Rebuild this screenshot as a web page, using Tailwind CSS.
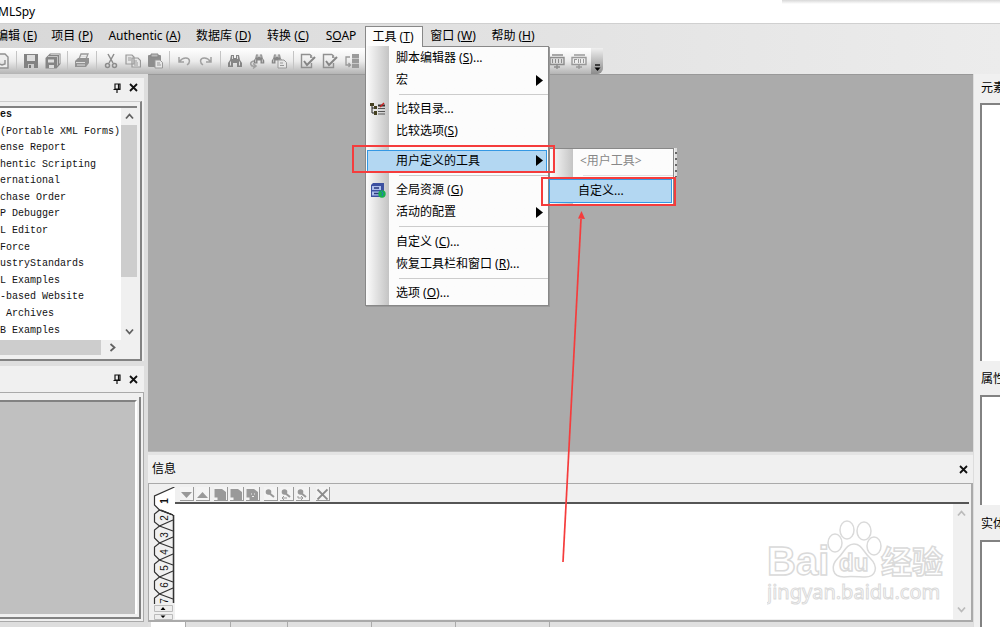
<!DOCTYPE html>
<html lang="zh">
<head>
<meta charset="utf-8">
<title>XMLSpy</title>
<script src="https://cdn.jsdelivr.net/npm/@tailwindcss/browser@4"></script>
</head>
<body class="relative flex h-screen flex-col overflow-hidden bg-[#e4e4e4] font-['Noto_Sans','Noto_Sans_CJK_SC',sans-serif] text-[12px] leading-4 text-black">
<svg class="hidden">
  <symbol id="pin" viewBox="0 0 8 10"><path d="M2 1h5v5H2zM0.5 6.5h7M4 7v3M5.5 1v5" fill="none" stroke="#111" stroke-width="1.2"/></symbol>
  <symbol id="close" viewBox="0 0 9 9"><path d="M1 1l7 7M8 1L1 8" fill="none" stroke="#111" stroke-width="1.8"/></symbol>
  <symbol id="binoc" viewBox="0 0 16 16"><path d="M4 2h3v3h2V2h3l1 5 2 3v4h-5v-4H6v4H1v-4l2-3z" fill="#858585"/><path d="M3.5 8.500v4M12.500 8.500v4M5.500 3v3M10.500 3v3" stroke="#ddd"/></symbol>
  <symbol id="check" viewBox="0 0 16 16"><path d="M10 1.500H1.500v13h10V10M10 1.500l2 2" fill="none" stroke="#909090" stroke-width="1.400"/><path d="M4 8l3 4 8-8" fill="none" stroke="#858585" stroke-width="2"/><path d="M10 1v4h3z" fill="#999"/></symbol>
  <symbol id="down" viewBox="0 0 9 9"><path d="M1 2.500l3.500 4 3.500-4" fill="none" stroke="currentColor" stroke-width="1.800"/></symbol>
  <symbol id="mark" viewBox="0 0 12 12"><circle cx="4.500" cy="4" r="2.800" fill="#999"/><path d="M5 5l5 4" stroke="#999" stroke-width="2"/></symbol>
  <symbol id="pages" viewBox="0 0 12 12"><path d="M0.500 1H8l4 3v8H3.500V9.500h-3z" fill="#999"/></symbol>
</svg>

<header class="flex h-6 shrink-0 items-center border-b border-[#d0d0d0] bg-white text-[12px]"><span class="-ml-0.5">MLSpy</span>
  <div class="absolute top-0 right-0 h-1 w-[218px] bg-gradient-to-b from-[#d8d8d8] to-white"></div>
</header>

<nav class="flex h-6 shrink-0 items-center bg-gradient-to-r from-[#d8d8d8] to-[#ececec]">
  <button class="-ml-[10px] h-full w-[53px] whitespace-nowrap text-center">编辑 (<u>E</u>)</button>
  <button class="h-full w-[58px] whitespace-nowrap">项目 (<u>P</u>)</button>
  <button class="h-full w-[87px] whitespace-nowrap">Authentic (<u>A</u>)</button>
  <button class="h-full w-[71px] whitespace-nowrap">数据库 (<u>D</u>)</button>
  <button class="h-full w-[58px] whitespace-nowrap">转换 (<u>C</u>)</button>
  <button class="h-full w-[48px] whitespace-nowrap">S<u>O</u>AP</button>
  <button class="mt-0.5 h-[22px] w-[58px] whitespace-nowrap border border-b-0 border-[#888] bg-[#fcfcfc] pr-[2px] pb-[2px]">工具 (<u>T</u>)</button>
  <button class="h-full w-[60px] whitespace-nowrap">窗口 (<u>W</u>)</button>
  <button class="h-full w-[60px] whitespace-nowrap">帮助 (<u>H</u>)</button>
</nav>

<div class="flex h-[26px] shrink-0 bg-gradient-to-r from-[#d8d8d8] to-[#ececec]">
  <div class="flex w-[603px] items-center rounded-r-md bg-gradient-to-b from-white via-[#ececec] to-[#b4b4b4]">
    <button aria-label="new" class="-ml-[9px] flex w-[22px] justify-center"><svg class="size-4"><path d="M2 1h9l3 3v11H2zM5 7v4l3 1 3-1V7" fill="#eee" stroke="#909090" stroke-width="1.400"/></svg></button>
    <i class="mx-[3px] h-5 w-px bg-[#c4c4c4]"></i>
    <button aria-label="save" class="flex w-[22px] justify-center"><svg class="size-4"><path d="M1 1h14v14H1z" fill="#828282"/><path d="M4 2h8v6H4z" fill="#ddd"/><path d="M5 11h6v4H5z" fill="#ccc"/><path d="M6 12h2v3H6z" fill="#777"/></svg></button>
    <button aria-label="save all" class="flex w-[22px] justify-center"><svg class="size-4"><path d="M5 0.500h10.500V11l-4 4.500H0.500V5z" fill="#858585"/><path d="M3 6.500h6v3H3zM4 12h5v3H4z" fill="#ddd"/><path d="M3 3.500h9.500v9M5.500 1.500h9v9" fill="none" stroke="#c4c4c4"/></svg></button>
    <i class="mx-[3px] h-5 w-px bg-[#c4c4c4]"></i>
    <button aria-label="print" class="flex w-[22px] justify-center"><svg class="size-4"><path d="M5 6l2-5h7l-2 5" fill="#eee" stroke="#999" stroke-width="1.300"/><path d="M1 8l3-3h11v5l-3 4H1z" fill="#929292"/><path d="M2 9.500h9M3 12h8M7 3.500h5" stroke="#ddd"/></svg></button>
    <i class="mx-[3px] h-5 w-px bg-[#c4c4c4]"></i>
    <button aria-label="cut" class="flex w-[22px] justify-center"><svg class="size-4"><g fill="none" stroke="#8c8c8c" stroke-width="1.500"><path d="M5 1l5 9M11 1L6 10"/><circle cx="4.500" cy="12.500" r="2"/><circle cx="11.500" cy="12.500" r="2"/></g></svg></button>
    <button aria-label="copy" class="flex w-[22px] justify-center"><svg class="size-4"><g fill="#e6e6e6" stroke="#999" stroke-width="1.200"><path d="M1 2h6l2 2v7H1zM7 5h6l2.500 2.500V14H7z"/><path d="M3 5h3M3 7h3M9 8h3M9 10h4M9 12h4"/></g></svg></button>
    <button aria-label="paste" class="flex w-[22px] justify-center"><svg class="size-4"><rect x="1" y="2" width="13" height="12" rx="1" fill="#8e8e8e"/><path d="M4 1h7v3H4z" fill="#bbb" stroke="#888"/><path d="M8 7h5l2.500 2.500V15H8z" fill="#e6e6e6" stroke="#999"/><path d="M10 10h3M10 12h4" stroke="#999"/></svg></button>
    <i class="mx-[3px] h-5 w-px bg-[#c4c4c4]"></i>
    <button aria-label="undo" class="flex w-[22px] justify-center"><svg class="size-4"><path d="M3 4v5h5M3.500 8.500C7 4 13 4 13.500 8c0 2-1 3-2.500 4" fill="none" stroke="#a0a0a0" stroke-width="1.500"/></svg></button>
    <button aria-label="redo" class="flex w-[22px] justify-center"><svg class="size-4"><path d="M13 4v5H8M12.500 8.500C9 4 3 4 2.500 8c0 2 1 3 2.500 4" fill="none" stroke="#a0a0a0" stroke-width="1.500"/></svg></button>
    <i class="mx-[3px] h-5 w-px bg-[#c4c4c4]"></i>
    <button aria-label="find" class="flex w-[22px] justify-center"><svg class="size-4"><use href="#binoc"/></svg></button>
    <button aria-label="find next" class="flex w-[22px] justify-center"><svg class="size-4"><use href="#binoc" x="4" y="0" width="12" height="12"/><path d="M5 8c-5 1-4 6 1 5M4 10.500l3 2.500-3 2.500" fill="none" stroke="#a0a0a0" stroke-width="1.500"/></svg></button>
    <button aria-label="find in files" class="flex w-[22px] justify-center"><svg class="size-4"><use href="#binoc" x="0" y="0" width="12" height="12"/><path d="M7 7h6l2.500 2.500V15H7z" fill="#e6e6e6" stroke="#999"/><path d="M9 10h3M9 12.500h4" stroke="#999"/></svg></button>
    <i class="mx-[3px] h-5 w-px bg-[#c4c4c4]"></i>
    <button aria-label="well-formed" class="flex w-[22px] justify-center"><svg class="size-4"><use href="#check"/></svg></button>
    <button aria-label="validate" class="flex w-[22px] justify-center"><svg class="size-4"><use href="#check"/></svg></button>
    <button aria-label="transform" class="flex w-[22px] justify-center"><svg class="size-4"><path d="M6 4H2v8h4M4.500 10L6.500 12l-2 2" fill="none" stroke="#999" stroke-width="1.300"/><path d="M8 1h7v14H8z" fill="#9a9a9a"/><path d="M8 5.500h7M8 10.500h7" stroke="#c8c8c8"/></svg></button>
    <button aria-label="soap" class="ml-auto flex w-[22px] justify-center"><svg class="size-4"><path d="M3 2h11M1 4.500h14v7H1zM8 12v4M5 14h6" fill="#ddd" stroke="#8c8c8c" stroke-width="1.400"/><path d="M3.500 6v4M6.500 6v4M9.500 6v4M12.500 6v4" stroke="#8c8c8c"/></svg></button>
    <button aria-label="file" class="flex w-[22px] justify-center"><svg class="size-4"><path d="M3 2h11M1 4.500h14v7H1zM8 12v4M5 14h6" fill="#eee" stroke="#999" stroke-width="1.400"/><path d="M3.500 6v4M4 6.500h2M7.500 6v4M9.500 6v4M12.500 6v4" stroke="#999"/></svg></button>
    <button aria-label="more" class="ml-px flex h-full w-3 items-end justify-center rounded-br-md bg-gradient-to-b from-[#f0f0f0] to-[#8c8c8c] pb-0.5"><svg class="h-2 w-[7px]"><path d="M1 1h5" stroke="#000" stroke-width="1.300"/><path d="M0.500 3.500h6L3.500 7z"/></svg></button>
  </div>
</div>

<main class="flex min-h-0 flex-1">
  <aside class="flex w-[148px] shrink-0 flex-col bg-[#dedede] pt-1 pr-1">
    <section class="flex h-[283px] shrink-0 flex-col bg-[#f0f0f0]">
      <div class="flex h-[23px] shrink-0 items-center justify-end gap-2 pr-[6px] pb-1">
        <button aria-label="pin"><svg class="h-[10px] w-2"><use href="#pin"/></svg></button><button aria-label="close"><svg class="size-[9px]"><use href="#close"/></svg></button>
      </div>
      <div class="mr-[2px] flex min-h-0 flex-1 flex-col border-t border-r-2 border-b-2 border-t-[#ccc] border-r-[#828282] border-b-[#828282] pr-[3px] pt-1 pb-1">
        <div class="flex min-h-0 flex-1 border-t-2 border-[#828282]">
          <ul class="flex min-w-0 flex-1 flex-col whitespace-pre bg-white font-['Liberation_Mono',monospace] text-[10px] leading-[14px] text-[#111]">
            <li class="min-h-0 flex-1 font-bold">es</li>
            <li class="min-h-0 flex-1">(Portable XML Forms)</li>
            <li class="min-h-0 flex-1">ense Report</li>
            <li class="min-h-0 flex-1">hentic Scripting</li>
            <li class="min-h-0 flex-1">ernational</li>
            <li class="min-h-0 flex-1">chase Order</li>
            <li class="min-h-0 flex-1">P Debugger</li>
            <li class="min-h-0 flex-1">L Editor</li>
            <li class="min-h-0 flex-1">Force</li>
            <li class="min-h-0 flex-1">ustryStandards</li>
            <li class="min-h-0 flex-1">L Examples</li>
            <li class="min-h-0 flex-1">-based Website</li>
            <li class="min-h-0 flex-1"> Archives</li>
            <li class="min-h-0 flex-1">B Examples</li>
          </ul>
          <div class="flex w-4 flex-col items-center bg-[#f0f0f0] text-[#606060]">
            <svg class="my-1 size-[9px] rotate-180"><use href="#down"/></svg>
            <div class="h-[152px] w-full bg-[#cdcdcd]"></div>
            <svg class="mt-auto mb-1 size-[9px]"><use href="#down"/></svg>
          </div>
        </div>
        <div class="flex h-[15px] shrink-0 items-center text-[#606060]"><div class="h-full w-[101px] bg-[#cdcdcd]"></div><svg class="ml-[7px] size-[9px] -rotate-90"><use href="#down"/></svg></div>
      </div>
    </section>
    <section class="mt-[5px] mb-[5px] flex min-h-0 flex-1 flex-col bg-[#f0f0f0]">
      <div class="flex h-[26px] shrink-0 items-center justify-end gap-2 pr-[6px]">
        <button aria-label="pin"><svg class="h-[10px] w-2"><use href="#pin"/></svg></button><button aria-label="close"><svg class="size-[9px]"><use href="#close"/></svg></button>
      </div>
      <div class="flex min-h-0 flex-1 border-y border-r border-[#aaa] pt-1 pr-[2px] pb-[2px]">
        <div class="flex flex-1 border-r-2 border-b-2 border-[#828282] pr-[2px] pt-[3px] pb-[3px]"><div class="flex-1 border-t-2 border-r-2 border-t-[#828282] border-r-white bg-[#c0c0c0]"></div></div>
      </div>
    </section>
  </aside>

  <div class="flex min-w-0 flex-1 flex-col">
    <div class="min-h-0 flex-1 border-t border-[#999] bg-[#ababab]"></div>
    <div class="h-1 shrink-0 border-t border-[#bbb] bg-[#e4e4e4]"></div>
    <section class="flex h-[167px] shrink-0 flex-col bg-[#f0f0f0]">
      <div class="flex h-[28px] shrink-0 items-center justify-between px-[4px]"><h2>信息</h2><button aria-label="close" class="mr-px"><svg class="size-[9px]"><use href="#close"/></svg></button></div>
      <div class="flex min-h-0 flex-1 border border-r-2 border-b-2 border-[#aaa] pt-[3px] pr-[2px] pb-px pl-1">
        <svg class="h-[133px] w-[22px] shrink-0" viewBox="0 0 22 133">
          <rect width="22" height="133" fill="#f0f0f0"/>
          <path d="M22 0L1.500 9v10l5 5L20 28h2z" fill="#fff"/>
          <g fill="none" stroke="#333" stroke-width="1.200">
            <path d="M21.500 0L1.500 9v9l5 5L20 28"/>
            <path d="M20 28L6.500 23l-5 4v8l5 4L20 44"/>
            <path d="M20 28L8 23M20 33L6.500 39l-5 4v8l5 5L20 61M20 50L6.500 56l-5 4v8l5 5L20 78M20 67L6.500 73l-5 4v8l5 5L20 95M20 84L6.500 90l-5 4v8l5 5L20 112M20 101L6.500 107l-5 4v6"/>
            <path d="M20.500 28v88" stroke-width="1.500"/>
          </g>
          <g class="font-['Liberation_Sans',sans-serif] text-[10px]" fill="#111" text-anchor="middle">
            <text transform="translate(15 14) rotate(-90)" font-weight="bold">1</text>
            <text transform="translate(15 31) rotate(-90)">2</text>
            <text transform="translate(15 48) rotate(-90)">3</text>
            <text transform="translate(15 65) rotate(-90)">4</text>
            <text transform="translate(15 81) rotate(-90)">5</text>
            <text transform="translate(15 98) rotate(-90)">6</text>
            <text transform="translate(15 114) rotate(-90)">7</text>
          </g>
          <path d="M1.500 118.500h18v6h-18zM1.500 127.500h18v5h-18z" fill="#eee" stroke="#bbb"/>
          <path d="M7.500 123h5L10 120zM7.500 128.500h5L10 131z"/>
        </svg>
        <div class="flex min-w-0 flex-1 flex-col">
          <div class="flex h-[17px] shrink-0 items-start gap-[2px] border-b-2 border-[#555] pl-[5px]">
            <button aria-label="next" class="h-[14px] w-[14px] border-r border-b border-[#999] bg-[#f4f4f4]"><svg class="size-3"><path d="M1 4h11L6.500 10z" fill="#999"/></svg></button>
            <button aria-label="previous" class="mr-[2px] h-[14px] w-[14px] border-r border-b border-[#999] bg-[#f4f4f4]"><svg class="size-3"><path d="M1 10h11L6.500 4z" fill="#999"/></svg></button>
            <button aria-label="copy line" class="h-[14px] w-[14px] border-r border-b border-[#999] bg-[#f4f4f4]"><svg class="size-3"><use href="#pages"/></svg></button>
            <button aria-label="copy lines" class="h-[14px] w-[14px] border-r border-b border-[#999] bg-[#f4f4f4]"><svg class="size-3"><use href="#pages"/></svg></button>
            <button aria-label="copy all" class="mr-[2px] h-[14px] w-[14px] border-r border-b border-[#999] bg-[#f4f4f4]"><svg class="size-3"><use href="#pages"/><path d="M5 6h1M8 6h1M6 8.500h2" stroke="#eee"/></svg></button>
            <button aria-label="find" class="h-[14px] w-[14px] border-r border-b border-[#999] bg-[#f4f4f4]"><svg class="size-3"><use href="#mark"/></svg></button>
            <button aria-label="find previous" class="h-[14px] w-[14px] border-r border-b border-[#999] bg-[#f4f4f4]"><svg class="size-3"><use href="#mark"/><path d="M7 10H2l2-2M2 10l2 2" fill="none" stroke="#999"/></svg></button>
            <button aria-label="find next" class="mr-1 h-[14px] w-[14px] border-r border-b border-[#999] bg-[#f4f4f4]"><svg class="size-3"><use href="#mark"/><path d="M2 8v2h5M5 8l2 2-2 2" fill="none" stroke="#999"/></svg></button>
            <button aria-label="clear" class="h-[14px] w-[14px] border-r border-b border-[#999] bg-[#f4f4f4]"><svg class="size-3"><path d="M1.500 1.500l10 10M11.500 1.500l-10 10" stroke="#8c8c8c" stroke-width="1.800"/></svg></button>
          </div>
          <div class="flex min-h-0 flex-1 bg-white">
            <div class="flex flex-1 items-start justify-end pt-[14px] pr-[4px]">
              <svg class="h-[96px] w-[182px]" viewBox="0 0 182 96" fill="#fff" stroke="#dadada" stroke-width="1.500">
                <text x="0" y="57" class="font-['Liberation_Sans',sans-serif] text-[40px] font-bold">Bai</text>
                <ellipse cx="68" cy="25" rx="7" ry="9"/><ellipse cx="80" cy="12" rx="7" ry="9"/><ellipse cx="97" cy="13" rx="7" ry="9"/><ellipse cx="107" cy="28" rx="7" ry="9"/>
                <path d="M87 26c8 0 9 8 16 14 9 9 6 19-5 19-5 0-16-1-21 0-12 0-14-11-6-19 6-5 8-14 16-14z"/>
                <text x="72" y="53" class="font-['Liberation_Sans',sans-serif] text-[24px] font-bold">du</text>
                <text x="114" y="55" class="font-['Noto_Sans_CJK_SC',sans-serif] text-[31px] font-bold">经验</text>
                <text x="0" y="81" class="font-['Noto_Sans',sans-serif] text-[20px]" stroke-width="1">jingyan.baidu.com</text>
              </svg>
            </div>
            <div class="flex w-4 flex-col items-center justify-between bg-[#f0f0f0] py-[5px] text-[#bbb]"><svg class="size-[9px] rotate-180"><use href="#down"/></svg><svg class="size-[9px]"><use href="#down"/></svg></div>
          </div>
        </div>
      </div>
    </section>
    <div class="flex h-[5px] shrink-0 bg-[#e0e0e0]"><i class="ml-[3px] w-[34px] bg-white"></i><i class="w-[46px] border-r border-l border-[#aaa]"></i><i class="w-[57px] border-r border-[#aaa]"></i><i class="w-[84px] border-r border-[#aaa]"></i><i class="w-[84px] border-r border-[#aaa]"></i><i class="w-[94px] border-r border-[#aaa]"></i></div>
  </div>

  <aside class="flex w-[27px] shrink-0 flex-col overflow-hidden border-l border-[#ddd] bg-[#f0f0f0] pl-[6px] whitespace-nowrap">
    <h2 class="h-[29px] shrink-0 pt-[6px] pl-px">元素</h2>
    <div class="h-[258px] shrink-0 border-t-2 border-l-2 border-[#828282] bg-white"></div>
    <h2 class="h-[34px] shrink-0 pt-[10px] pl-px">属性</h2>
    <div class="h-[110px] shrink-0 border-t-2 border-l-2 border-[#828282] bg-white"></div>
    <h2 class="h-[35px] shrink-0 pt-[11px] pl-px">实体</h2>
    <div class="flex-1 border-t-2 border-l-2 border-[#828282] bg-white"></div>
  </aside>
</main>

<!-- Tools menu -->
<div class="absolute top-[46px] left-[365px] flex h-[260px] w-[184px] flex-col border border-t-0 border-[#888] bg-gradient-to-r from-[#fcfcfc] from-0% via-[#c4c4c4] via-[23px] to-[#fcfcfc] to-[23px] pt-px pb-px shadow-[1px_1px_0_#999]">
  <div class="absolute top-0 right-0 h-px w-[126px] bg-[#888]"></div>
  <button class="h-[22px] shrink-0 pl-[30px] text-left">脚本编辑器 (<u>S</u>)...</button>
  <button class="flex h-[22px] shrink-0 items-center justify-between pr-[5px] pl-[30px]">宏<svg class="h-[11px] w-[7px]"><path d="M0 0l7 5.500L0 11z"/></svg></button>
  <div class="ml-[33px] flex flex-1 items-center"><i class="h-px w-full bg-[#ccc]"></i></div>
  <button class="flex h-[22px] shrink-0 items-center pl-1"><svg class="mr-[10px] h-[14px] w-4" viewBox="0 0 16 14"><path d="M2 3v8h3M2 6h3" fill="none" stroke="#222"/><path d="M0 1h4v3H0zM4 4h3v3H4zM4 9h3v4H4z" fill="#444020"/><path d="M8 6.500h7M8 9.500h7M8 12h7" stroke="#555"/><path d="M8 3.500h7" stroke="#333" stroke-width="2"/><path d="M10 5l4-4" stroke="#c22" stroke-width="1.500"/></svg>比较目录...</button>
  <button class="h-[22px] shrink-0 pl-[30px] text-left">比较选项(<u>S</u>)</button>
  <div class="ml-[33px] flex flex-1 items-center"><i class="h-px w-full bg-[#ccc]"></i></div>
  <button class="mx-px flex h-[22px] shrink-0 items-center justify-between border border-[#3498e4] bg-[#b3d7f2] pr-[3px] pl-[28px]">用户定义的工具<svg class="h-[11px] w-[7px]"><path d="M0 0l7 5.500L0 11z"/></svg></button>
  <div class="ml-[33px] flex flex-1 items-center"><i class="h-px w-full bg-[#ccc]"></i></div>
  <button class="flex h-[22px] shrink-0 items-center pl-1"><svg class="mr-[10px] size-4" viewBox="0 0 16 16"><path d="M1 3l2-2h11v12l-2 2H1z" fill="#3c50a0"/><path d="M2 4h9v4H2zM2 9.500h9v4H2z" fill="#aebfec"/><path d="M4 6h5M4 11.500h5" stroke="#28387c" stroke-width="1.500"/><circle cx="12" cy="12" r="3.700" fill="#18b04c"/><path d="M11 9l2 2-1 3" stroke="#2478c0" fill="none"/></svg>全局资源 (<u>G</u>)</button>
  <button class="flex h-[22px] shrink-0 items-center justify-between pr-[5px] pl-[30px]">活动的配置<svg class="h-[11px] w-[7px]"><path d="M0 0l7 5.500L0 11z"/></svg></button>
  <div class="ml-[33px] flex flex-1 items-center"><i class="h-px w-full bg-[#ccc]"></i></div>
  <button class="h-[22px] shrink-0 pl-[30px] text-left">自定义 (<u>C</u>)...</button>
  <button class="h-[22px] shrink-0 pl-[30px] text-left">恢复工具栏和窗口 (<u>R</u>)...</button>
  <div class="ml-[33px] flex flex-1 items-center"><i class="h-px w-full bg-[#ccc]"></i></div>
  <button class="h-[22px] shrink-0 pl-[30px] text-left">选项 (<u>O</u>)...</button>
</div>

<!-- Submenu -->
<div class="absolute top-[148px] left-[549px] flex w-[125px] flex-col border border-[#888] bg-gradient-to-r from-[#fcfcfc] from-0% via-[#c4c4c4] via-[23px] to-[#fcfcfc] to-[23px] pt-px pb-[2px]">
  <button class="h-[22px] pl-[30px] text-left text-[#888]" disabled>&lt;用户工具&gt;</button>
  <div class="flex h-[7px] items-center pl-[33px]"><i class="h-px w-full bg-[#e0e0e0]"></i></div>
  <button class="-ml-px mr-px h-6 border border-[#3498e4] bg-[#b3d7f2] pl-[28px] text-left">自定义...</button>
</div>
<div class="absolute top-[148px] left-[674px] h-[29px] w-[3px] border-l border-[#eee] bg-[repeating-linear-gradient(#ddd_0_4px,#666_4px_6px)]"></div>

<!-- Callouts -->
<div class="absolute top-[145px] left-[352px] h-[28px] w-[203px] border-2 border-[#f53c3c]"></div>
<div class="absolute top-[177px] left-[541px] h-[29px] w-[135px] border-2 border-[#f53c3c]"></div>
<svg class="absolute top-[211px] left-[560px] h-[352px] w-[26px]" viewBox="0 0 26 352"><path d="M3 351L21 8" stroke="#f53c3c" stroke-width="1.700"/><path d="M21.500 0L25 8l-7-0.400z" fill="#f53c3c"/></svg>
</body>
</html>
